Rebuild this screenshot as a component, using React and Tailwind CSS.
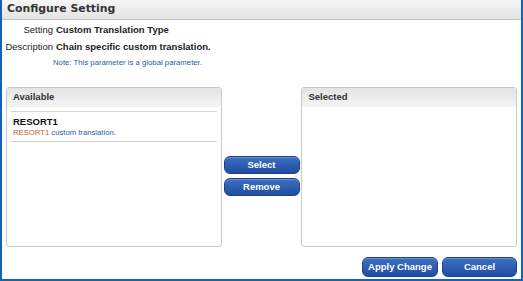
import React from 'react';

const font = { fontFamily: 'Arial, "Liberation Sans", sans-serif' };
const wide = { fontFamily: '"DejaVu Sans", Verdana, sans-serif' };

function BlueButton({ children, className = '' }) {
    return (
        <button
            type="button"
            className={`rounded-[6px] border border-[#1a3f85] bg-gradient-to-b from-[#3d6fc4] to-[#1f4ea0] text-[9.5px] font-bold text-white shadow-[inset_0_1px_0_rgba(255,255,255,0.25)] ${className}`}
        >
            {children}
        </button>
    );
}

function Panel({ title, children }) {
    return (
        <div className="flex h-[160px] w-[216px] flex-col rounded-[3px] border border-[#c8c8c8] bg-white">
            <div className="flex h-[19px] items-center bg-gradient-to-b from-[#e4e4e4] to-[#f4f4f4] px-[6px] text-[9.5px] font-bold text-[#333]">
                {title}
            </div>
            <div className="px-[4px] pt-[4px]">{children}</div>
        </div>
    );
}

export default function App() {
    return (
        <div style={font} className="flex h-[281px] w-[523px] flex-col border-x-2 border-b-2 border-[#1461b8] bg-white">
            <div
                style={wide}
                className="flex h-[20px] items-center border-b border-[#c4c4c4] bg-gradient-to-b from-[#f6f6f6] to-[#e4e4e4] px-[5px] text-[10.9px] font-bold text-[#333]"
            >
                Configure Setting
            </div>

            <div className="mt-[3px] grid grid-cols-[51px_1fr] gap-x-[3px] gap-y-[3px] text-[9.5px] leading-[14px] text-[#222]">
                <span className="text-right">Setting</span>
                <span className="font-bold">Custom Translation Type</span>
                <span className="text-right">Description</span>
                <span className="font-bold">Chain specific custom translation.</span>
            </div>
            <div className="mt-[3px] pl-[51px] text-[7.75px] text-[#2f5d9a]">
                Note: This parameter is a global parameter.
            </div>

            <div className="mt-[18px] flex items-start px-[4px]">
                <Panel title="Available">
                    <div className="border-y border-[#d4d4d4] px-[2px] pb-[3px] pt-[4px]">
                        <div className="text-[9.5px] font-bold leading-[12px] text-[#111]">RESORT1</div>
                        <div className="text-[7.7px] leading-[10px]">
                            <span className="text-[#c0622a]">RESORT1 </span>
                            <span className="text-[#2f5d9a]">custom translation.</span>
                        </div>
                    </div>
                </Panel>
                <div className="flex w-[80px] flex-col items-center gap-[4px] pt-[69px]">
                    <BlueButton className="h-[18px] w-[76px]">Select</BlueButton>
                    <BlueButton className="h-[18px] w-[76px]">Remove</BlueButton>
                </div>
                <Panel title="Selected" />
            </div>

            <div className="mt-[10px] flex justify-end gap-[4px] pr-[4px]">
                <BlueButton className="h-[20px] w-[76px]">Apply Change</BlueButton>
                <BlueButton className="h-[20px] w-[75px]">Cancel</BlueButton>
            </div>
        </div>
    );
}
